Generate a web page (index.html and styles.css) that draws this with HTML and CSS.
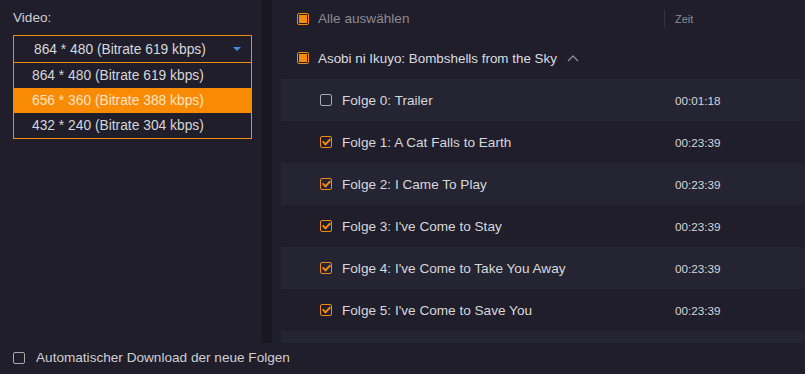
FILE: index.html
```html
<!DOCTYPE html>
<html lang="de">
<head>
<meta charset="utf-8">
<link rel="stylesheet" href="styles.css">
</head>
<body>
<div class="app">
  <div class="main">
    <div class="left">
      <div class="label">Video:</div>
      <div class="dropdown">
        <div class="select">
          <span class="select-text">864 * 480 (Bitrate 619 kbps)</span>
          <span class="arrow"></span>
        </div>
        <div class="options">
          <div class="option">864 * 480 (Bitrate 619 kbps)</div>
          <div class="option active">656 * 360 (Bitrate 388 kbps)</div>
          <div class="option">432 * 240 (Bitrate 304 kbps)</div>
        </div>
      </div>
    </div>
    <div class="divider"></div>
    <div class="right">
      <div class="head-row">
        <div class="head-name">
          <span class="cb partial"></span>
          <span class="head-label">Alle auswählen</span>
        </div>
        <div class="head-sep"></div>
        <div class="head-time">Zeit</div>
      </div>
      <div class="group-row">
        <span class="cb partial"></span>
        <span class="group-title">Asobi ni Ikuyo: Bombshells from the Sky</span>
        <svg class="chevron" width="12" height="8" viewBox="0 0 12 8"><path d="M1 7 L6 2 L11 7" fill="none" stroke="#8a8a94" stroke-width="1.4"/></svg>
      </div>
      <div class="ep-row alt">
        <div class="ep-name"><span class="cb"></span><span>Folge 0: Trailer</span></div>
        <div class="ep-time">00:01:18</div>
      </div>
      <div class="ep-row">
        <div class="ep-name"><span class="cb checked"></span><span>Folge 1: A Cat Falls to Earth</span></div>
        <div class="ep-time">00:23:39</div>
      </div>
      <div class="ep-row alt">
        <div class="ep-name"><span class="cb checked"></span><span>Folge 2: I Came To Play</span></div>
        <div class="ep-time">00:23:39</div>
      </div>
      <div class="ep-row">
        <div class="ep-name"><span class="cb checked"></span><span>Folge 3: I've Come to Stay</span></div>
        <div class="ep-time">00:23:39</div>
      </div>
      <div class="ep-row alt">
        <div class="ep-name"><span class="cb checked"></span><span>Folge 4: I've Come to Take You Away</span></div>
        <div class="ep-time">00:23:39</div>
      </div>
      <div class="ep-row">
        <div class="ep-name"><span class="cb checked"></span><span>Folge 5: I've Come to Save You</span></div>
        <div class="ep-time">00:23:39</div>
      </div>
      <div class="ep-row alt"></div>
    </div>
  </div>
  <div class="footer">
    <span class="cb"></span>
    <span class="footer-label">Automatischer Download der neue Folgen</span>
  </div>
</div>
</body>
</html>
```

FILE: styles.css
```css
* { box-sizing: border-box; }
html, body {
  margin: 0;
  padding: 0;
  width: 805px;
  height: 374px;
  overflow: hidden;
  background: #1f1e2a;
  font-family: "Liberation Sans", Arial, sans-serif;
  font-size: 13.6px;
  color: #d6d6da;
}
.app {
  display: flex;
  flex-direction: column;
  height: 374px;
}
.main {
  display: flex;
  height: 343px;
}
.left {
  width: 262px;
  padding: 10px 0 0 13px;
}
.label {
  color: #cfcfd3;
  line-height: 15px;
  margin-bottom: 10px;
}
.dropdown {
  width: 239px;
  border: 1px solid #f28c0f;
  font-size: 13.8px;
}
.select {
  height: 27px;
  display: flex;
  align-items: center;
  justify-content: space-between;
  padding: 0 10px 0 20px;
  border-bottom: 1px solid #f28c0f;
}
.select-text { color: #d8d8dc; }
.arrow {
  width: 0;
  height: 0;
  border-left: 4px solid transparent;
  border-right: 4px solid transparent;
  border-top: 4px solid #3d8fe8;
}
.option {
  height: 25px;
  line-height: 25px;
  padding-left: 18px;
  color: #d6d6da;
}
.option.active {
  background: #f98b04;
  color: #fbe3c8;
}
.divider {
  width: 10px;
  background: #191821;
}
.right {
  flex: 1;
  margin-left: 9px;
  overflow: hidden;
}
.cb {
  width: 12px;
  height: 12px;
  border: 1.5px solid #a9a9ae;
  border-radius: 2px;
  flex: none;
  position: relative;
}
.cb.partial {
  border: 1px solid #f28c0f;
  border-radius: 2px;
  padding: 1px;
}
.cb.partial::after {
  content: "";
  display: block;
  width: 8px;
  height: 8px;
  background: #f98b04;
}
.cb.checked {
  border: 1.5px solid #f28c0f;
}
.cb.checked::after {
  content: "";
  position: absolute;
  left: 2.5px;
  top: 0px;
  width: 3px;
  height: 6px;
  border-right: 2px solid #f28c0f;
  border-bottom: 2px solid #f28c0f;
  transform: rotate(45deg);
}
.head-row {
  height: 37px;
  display: flex;
  align-items: center;
}
.head-name {
  width: 383px;
  display: flex;
  align-items: center;
  gap: 9px;
  padding-left: 16px;
}
.head-label { color: #8c8b94; }
.head-sep {
  width: 1px;
  height: 17px;
  background: #33323f;
}
.head-time {
  padding-left: 10px;
  color: #8c8b94;
  font-size: 11px;
}
.group-row {
  height: 42px;
  display: flex;
  align-items: center;
  padding-left: 16px;
  gap: 9px;
}
.group-title { color: #dcdce0; font-size: 13.4px; }
.chevron { margin-left: 1px; }
.ep-row {
  height: 42px;
  display: flex;
  align-items: center;
}
.ep-row.alt { background: #252432; }
.ep-name {
  width: 394px;
  display: flex;
  align-items: center;
  gap: 10px;
  padding-left: 39px;
  color: #d8d8dc;
}
.ep-time {
  font-size: 11.7px;
  color: #d6d6da;
}
.footer {
  flex: 1;
  display: flex;
  align-items: center;
  gap: 11px;
  padding: 0 0 2px 13px;
}
.footer-label { color: #cfcfd3; }
```
